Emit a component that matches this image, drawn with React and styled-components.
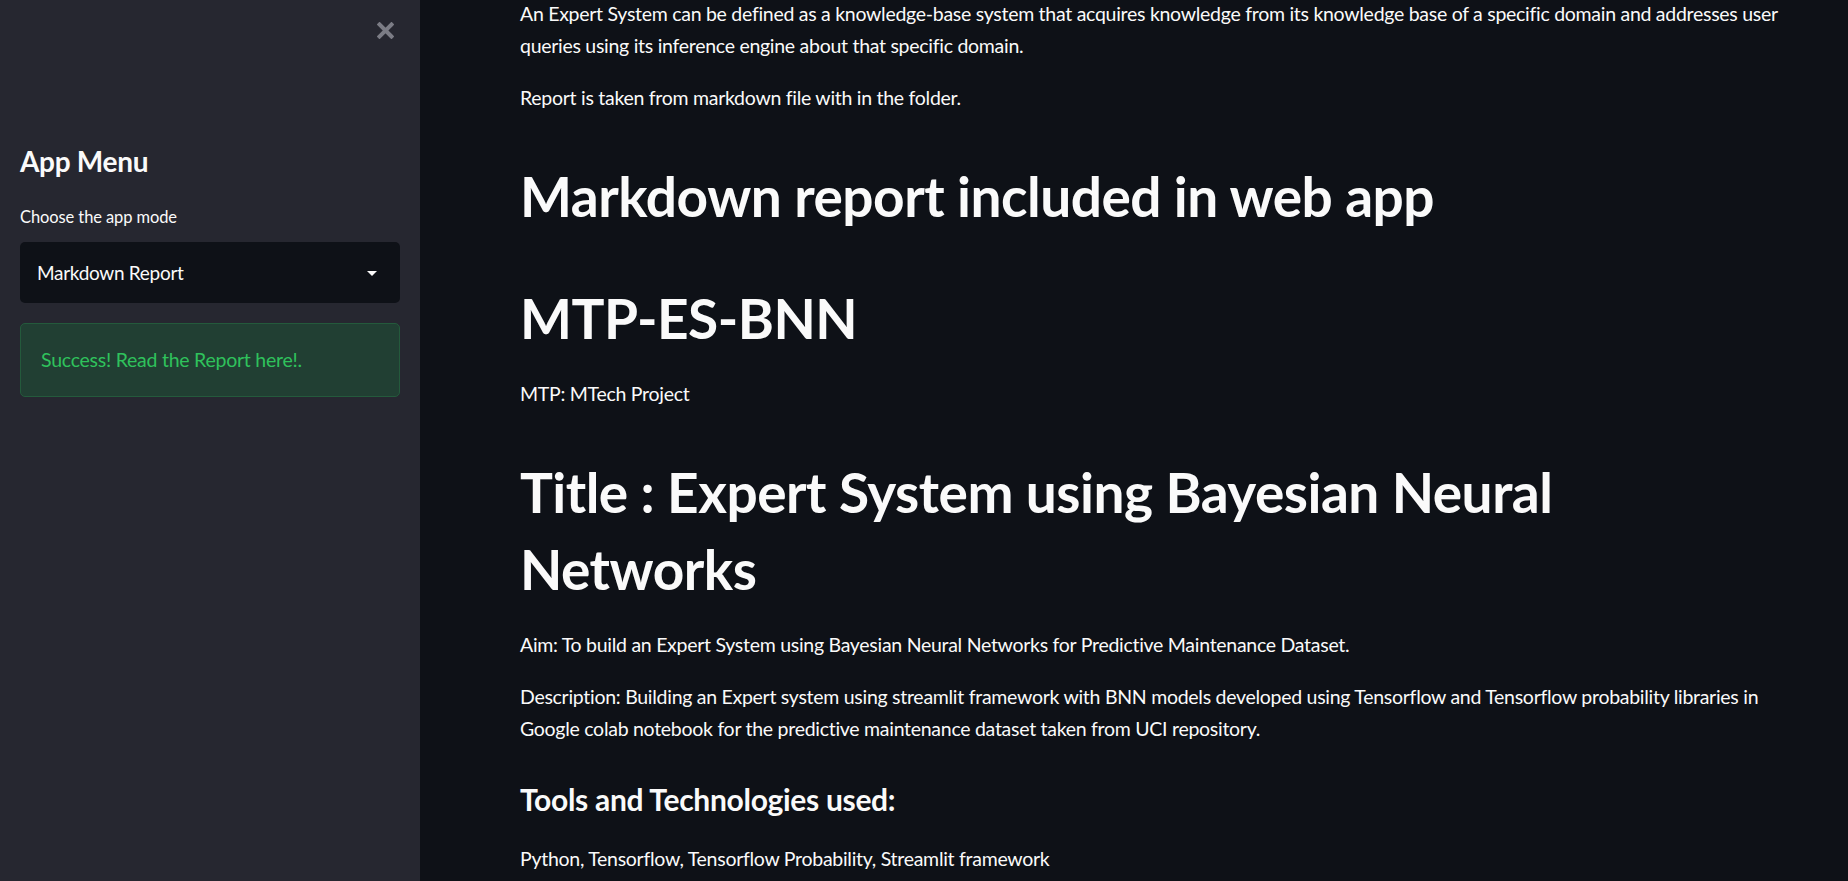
import React from "react";
import styled, { createGlobalStyle } from "styled-components";

const GlobalStyle = createGlobalStyle`
  html, body {
    margin: 0;
    padding: 0;
    height: 100%;
    background: #0e1117;
    overflow: hidden;
  }
  #root {
    height: 100%;
  }
  * {
    box-sizing: border-box;
  }
`;

const FONT = `Lato, "Noto Sans", "Liberation Sans", sans-serif`;

const Layout = styled.div`
  display: flex;
  height: 881px;
  font-family: ${FONT};
  color: #fafafa;
`;

const Sidebar = styled.aside`
  width: 420px;
  flex-shrink: 0;
  background: #262730;
  padding: 0 20px;
  display: flex;
  flex-direction: column;
`;

const CloseRow = styled.div`
  height: 60px;
  display: flex;
  align-items: center;
  justify-content: flex-end;
  padding-right: 6px;
`;

const CloseButton = styled.button`
  background: none;
  border: none;
  padding: 0;
  width: 18px;
  height: 18px;
  display: flex;
  align-items: center;
  justify-content: center;
  cursor: pointer;
`;

const SideTitle = styled.h2`
  margin: 83px 0 0;
  font-size: 28px;
  line-height: 36px;
  font-weight: 700;
  letter-spacing: -0.3px;
`;

const Label = styled.label`
  margin-top: 24px;
  font-size: 16.5px;
  line-height: 28px;
  letter-spacing: -0.1px;
`;

const Select = styled.div`
  margin-top: 11px;
  height: 61px;
  background: #0e1117;
  border-radius: 5px;
  display: flex;
  align-items: center;
  justify-content: space-between;
  padding: 0 23px 0 17px;
  font-size: 19px;
  line-height: 32px;
  letter-spacing: -0.3px;
`;

const Caret = styled.span`
  width: 0;
  height: 0;
  border-left: 5px solid transparent;
  border-right: 5px solid transparent;
  border-top: 5px solid #fafafa;
  margin-top: 2px;
`;

const Alert = styled.div`
  margin-top: 20px;
  padding: 20px 20px;
  border: 1px solid #245a3c;
  border-radius: 5px;
  background: #213f33;
  color: #2fc25c;
  font-size: 19.5px;
  line-height: 32px;
  letter-spacing: -0.25px;
`;

const Main = styled.main`
  flex: 1;
  overflow: hidden;
  padding: 0 40px 0 100px;
`;

const Content = styled.div`
  margin-top: -2px;
  max-width: 1268px;
`;

const Paragraph = styled.p`
  margin: 0 0 20px;
  font-size: 19.5px;
  line-height: 32px;
  letter-spacing: -0.28px;
`;

const H1 = styled.h1`
  margin: 0;
  padding: 24px 0 21px;
  font-size: 55px;
  line-height: 77px;
  font-weight: 700;
  letter-spacing: -0.5px;
`;

const H3 = styled.h3`
  margin: 0;
  padding: 16px 0 25px;
  font-size: 30px;
  line-height: 37px;
  font-weight: 700;
  letter-spacing: -0.3px;
`;

const CloseIcon = () => (
  <svg width="17" height="17" viewBox="0 0 17 17">
    <path
      d="M2.5 2.5 L14.5 14.5 M14.5 2.5 L2.5 14.5"
      stroke="#7b7c85"
      strokeWidth="4"
      strokeLinecap="square"
    />
  </svg>
);

export default function App() {
  return (
    <>
      <GlobalStyle />
      <Layout>
        <Sidebar>
          <CloseRow>
            <CloseButton aria-label="Close sidebar">
              <CloseIcon />
            </CloseButton>
          </CloseRow>
          <SideTitle>App Menu</SideTitle>
          <Label>Choose the app mode</Label>
          <Select>
            <span>Markdown Report</span>
            <Caret />
          </Select>
          <Alert>Success! Read the Report here!.</Alert>
        </Sidebar>
        <Main>
          <Content>
            <Paragraph>
              An Expert System can be defined as a knowledge-base system that acquires knowledge
              from its knowledge base of a specific domain and addresses user queries using its
              inference engine about that specific domain.
            </Paragraph>
            <Paragraph>Report is taken from markdown file with in the folder.</Paragraph>
            <H1>Markdown report included in web app</H1>
            <H1>MTP-ES-BNN</H1>
            <Paragraph>MTP: MTech Project</Paragraph>
            <H1>Title : Expert System using Bayesian Neural Networks</H1>
            <Paragraph>
              Aim: To build an Expert System using Bayesian Neural Networks for Predictive
              Maintenance Dataset.
            </Paragraph>
            <Paragraph>
              Description: Building an Expert system using streamlit framework with BNN models
              developed using Tensorflow and Tensorflow probability libraries in Google colab
              notebook for the predictive maintenance dataset taken from UCI repository.
            </Paragraph>
            <H3>Tools and Technologies used:</H3>
            <Paragraph>Python, Tensorflow, Tensorflow Probability, Streamlit framework</Paragraph>
          </Content>
        </Main>
      </Layout>
    </>
  );
}
